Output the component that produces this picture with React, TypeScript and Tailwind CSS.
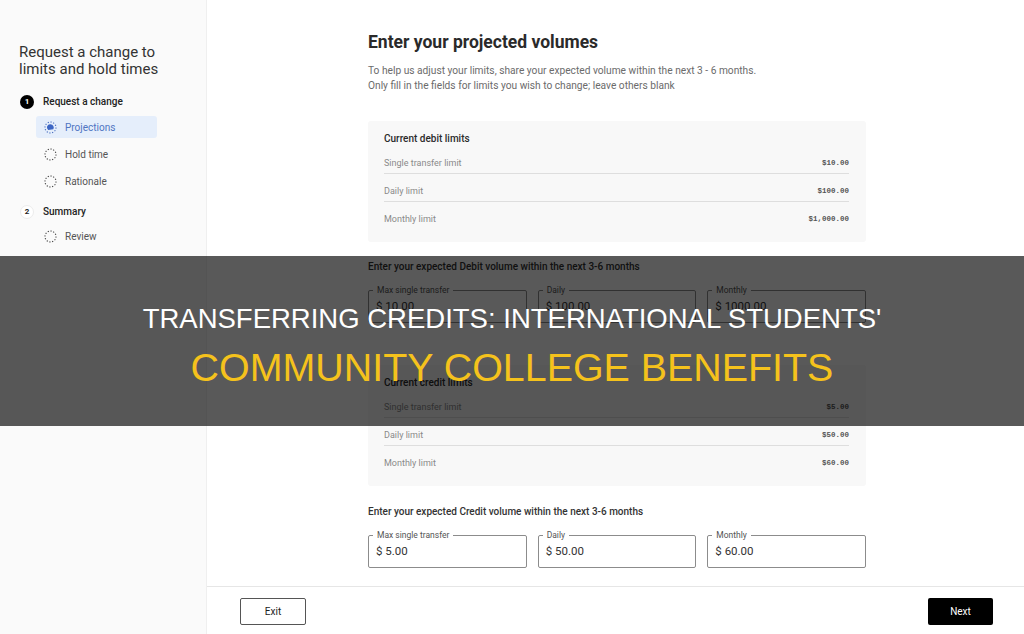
import React from 'react'

const debitLimits = [
  { label: 'Single transfer limit', value: '$10.00' },
  { label: 'Daily limit', value: '$100.00' },
  { label: 'Monthly limit', value: '$1,000.00' },
]

const creditLimits = [
  { label: 'Single transfer limit', value: '$5.00' },
  { label: 'Daily limit', value: '$50.00' },
  { label: 'Monthly limit', value: '$60.00' },
]

const debitInputs = [
  { label: 'Max single transfer', value: '$ 10.00' },
  { label: 'Daily', value: '$ 100.00' },
  { label: 'Monthly', value: '$ 1000.00' },
]

const creditInputs = [
  { label: 'Max single transfer', value: '$ 5.00' },
  { label: 'Daily', value: '$ 50.00' },
  { label: 'Monthly', value: '$ 60.00' },
]

function DottedCircle({ active }: { active?: boolean }) {
  return (
    <svg width="13" height="13" viewBox="0 0 13 13" className="shrink-0">
      <circle
        cx="6.5"
        cy="6.5"
        r="5.5"
        fill="none"
        stroke={active ? '#4a6fc0' : '#444'}
        strokeWidth="1.1"
        strokeDasharray="1.2 1.6"
      />
      {active && <path d="M6.5 3.2 A3.3 3.3 0 0 1 9.3 8.2 L4.2 9.1 A3.3 3.3 0 0 1 6.5 3.2 Z" fill="#3d66c4" />}
    </svg>
  )
}

function LimitsCard({ title, rows }: { title: string; rows: { label: string; value: string }[] }) {
  return (
    <div className="bg-[#f8f8f8] rounded-[3px] pt-[11px] pb-[13px] pl-[16px] pr-[17px]">
      <div className="text-[10px] leading-[14px] font-medium text-[#2b2b2b]">{title}</div>
      {rows.map((r, i) => (
        <div
          key={r.label}
          className={
            'flex items-center justify-between pt-[11px] pb-[4px] ' +
            (i < rows.length - 1 ? 'border-b border-[#dedede]' : '')
          }
        >
          <span className="text-[9px] leading-[12px] text-[#8a8a8a]">{r.label}</span>
          <span className="text-[7.5px] leading-[12px] text-[#555] font-bold" style={{ fontFamily: '"Liberation Mono", monospace' }}>
            {r.value}
          </span>
        </div>
      ))}
    </div>
  )
}

function VolumeInputs({ title, inputs }: { title: string; inputs: { label: string; value: string }[] }) {
  return (
    <div>
      <div className="text-[10px] leading-[12px] font-medium text-[#333]">{title}</div>
      <div className="mt-[12px] grid grid-cols-3 gap-[11px]">
        {inputs.map((f) => (
          <fieldset key={f.label} className="border border-[#8c8c8c] rounded-[2px] px-0">
            <legend className="ml-[4px] px-[4px] text-[8.5px] leading-[10px] text-[#555]">{f.label}</legend>
            <div className="h-[27px] flex items-center pl-[7px] pb-[3px] text-[11.5px] text-[#333]">{f.value}</div>
          </fieldset>
        ))}
      </div>
    </div>
  )
}

export default function App() {
  return (
    <div className="relative w-[1024px] h-[634px] overflow-hidden flex bg-white" style={{ fontFamily: 'Roboto, "Liberation Sans", sans-serif' }}>
      {/* sidebar */}
      <aside className="w-[207px] h-full bg-[#fafafa] border-r border-[#efefef] pl-[19px] pt-[44px]">
        <h2 className="text-[15px] leading-[17px] text-[#333]">
          Request a change to
          <br />
          limits and hold times
        </h2>
        <div className="mt-[16px] flex items-center gap-[9px] pl-[1px]">
          <span className="w-[14px] h-[14px] rounded-full bg-black text-white text-[8px] font-bold flex items-center justify-center">1</span>
          <span className="text-[10px] font-medium text-[#222]">Request a change</span>
        </div>
        <div className="mt-[7px] ml-[17px] flex flex-col gap-[5px]">
          <div className="w-[121px] h-[22px] rounded-[3px] bg-[#e5eefb] flex items-center gap-[8px] pl-[8px]">
            <DottedCircle active />
            <span className="text-[10px] text-[#4f75c2]">Projections</span>
          </div>
          <div className="h-[22px] flex items-center gap-[8px] pl-[8px]">
            <DottedCircle />
            <span className="text-[10px] text-[#555]">Hold time</span>
          </div>
          <div className="h-[22px] flex items-center gap-[8px] pl-[8px]">
            <DottedCircle />
            <span className="text-[10px] text-[#555]">Rationale</span>
          </div>
        </div>
        <div className="mt-[12px] flex items-center gap-[9px] pl-[1px]">
          <span className="w-[14px] h-[14px] rounded-full bg-white border border-[#ececec] text-[#222] text-[8px] font-bold flex items-center justify-center">2</span>
          <span className="text-[10px] font-medium text-[#222]">Summary</span>
        </div>
        <div className="mt-[6px] ml-[17px]">
          <div className="h-[22px] flex items-center gap-[8px] pl-[8px]">
            <DottedCircle />
            <span className="text-[10px] text-[#555]">Review</span>
          </div>
        </div>
      </aside>

      {/* main */}
      <main className="flex-1 h-full flex flex-col">
        <div className="flex-1 pl-[161px] pt-[31px]">
          <div className="w-[498px]">
            <h1 className="text-[17.5px] leading-[22px] font-bold text-[#2a2a2a]">Enter your projected volumes</h1>
            <p className="mt-[10px] text-[10.2px] leading-[15px] text-[#6b6b6b]">
              To help us adjust your limits, share your expected volume within the next 3 - 6 months.
              <br />
              Only fill in the fields for limits you wish to change; leave others blank
            </p>
            <div className="mt-[28px]">
              <LimitsCard title="Current debit limits" rows={debitLimits} />
            </div>
            <div className="mt-[19px]">
              <VolumeInputs title="Enter your expected Debit volume within the next 3-6 months" inputs={debitInputs} />
            </div>
            <div className="mt-[42px]">
              <LimitsCard title="Current credit limits" rows={creditLimits} />
            </div>
            <div className="mt-[20px]">
              <VolumeInputs title="Enter your expected Credit volume within the next 3-6 months" inputs={creditInputs} />
            </div>
          </div>
        </div>
        <footer className="h-[48px] border-t border-[#e6e6e6] flex items-center justify-between pl-[33px] pr-[31px] pt-[2px]">
          <button className="w-[66px] h-[27px] border border-[#555] rounded-[2px] text-[10px] text-[#222] bg-white">Exit</button>
          <button className="w-[65px] h-[27px] rounded-[2px] text-[10px] text-white bg-black">Next</button>
        </footer>
      </main>

      {/* title banner over the screenshot */}
      <div className="absolute left-0 right-0 top-[256px] h-[170px] bg-black/65 flex flex-col items-center pt-[47px]" style={{ fontFamily: '"Liberation Sans", Arial, sans-serif' }}>
        <div className="text-[27.5px] leading-[32px] text-white whitespace-nowrap">TRANSFERRING CREDITS: INTERNATIONAL STUDENTS'</div>
        <div className="mt-[9px] text-[39.4px] leading-[46px] text-[#f5c21c] whitespace-nowrap">COMMUNITY COLLEGE BENEFITS</div>
      </div>
    </div>
  )
}
